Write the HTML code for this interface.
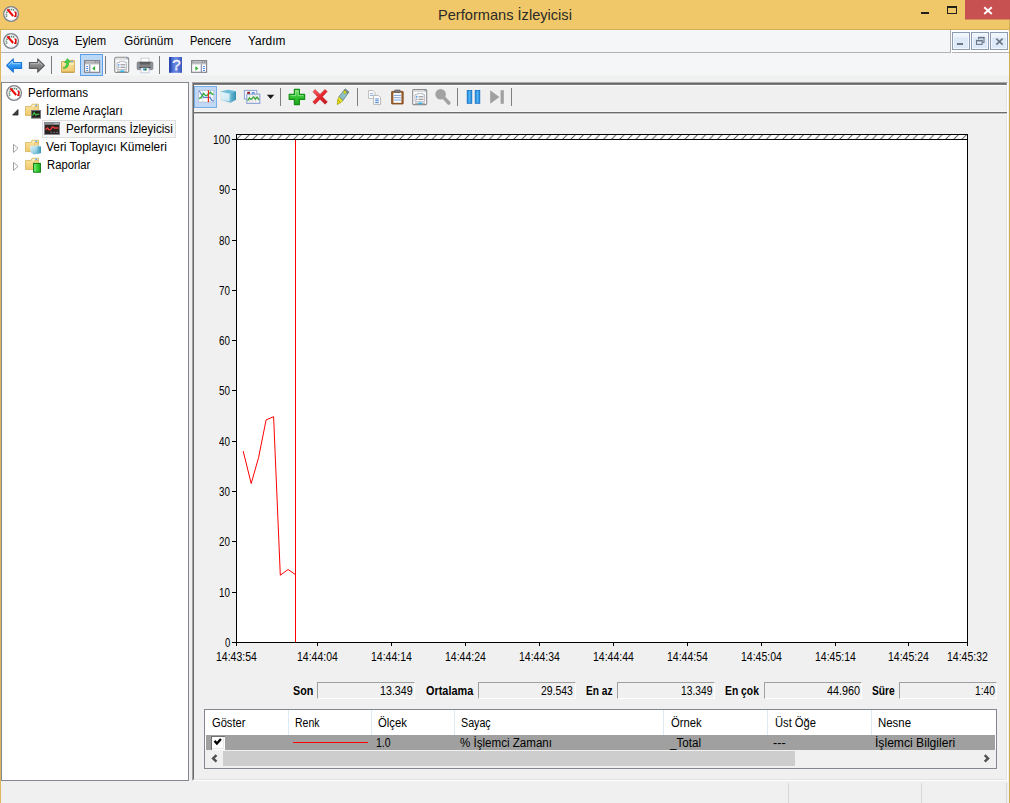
<!DOCTYPE html>
<html lang="tr"><head><meta charset="utf-8"><title>Performans İzleyicisi</title>
<style>
*{box-sizing:border-box;margin:0;padding:0}
html,body{width:1010px;height:803px;overflow:hidden;background:#f0f0f0}
body{font-family:"Liberation Sans",sans-serif;font-size:12px;color:#000;position:relative}
#root{left:0;top:0;width:1010px;height:803px;overflow:hidden}
.abs,.abs *{position:absolute}
.abs svg *{position:static}
.t{white-space:nowrap;transform-origin:0 0;line-height:14px;height:14px}
.b{display:block}
.sb{top:682px;width:98px;height:17px;border-top:1px solid #a0a0a0;border-left:1px solid #a0a0a0;border-right:1px solid #fff;border-bottom:1px solid #fff}
.cd{top:710px;width:1px;height:25px;background:#e0eaf5}
.mb{top:32px;width:18px;height:18px;border:1px solid #8c9db3;background:linear-gradient(#eef4fc 0,#eef4fc 25%,#dde9f7 30%,#dde9f7 100%);box-shadow:inset 0 0 0 1px #f4f8fd}

</style></head><body>
<div class="abs" id="root">
<!-- title bar -->
<div style="left:0;top:0;width:1010px;height:29px;background:#f0c869"></div>
<div style="left:0;top:29px;width:1010px;height:1px;background:#d3ae58"></div>
<div style="left:965px;top:0;width:45px;height:19px;background:#c75050"></div>
<div style="left:965px;top:19px;width:45px;height:1px;background:#d88a5a"></div>
<!-- menu bar -->
<div style="left:1px;top:30px;width:1008px;height:23px;background:#f5f6f7"></div>
<div style="left:1px;top:52px;width:950px;height:1px;background:#b1b2b3"></div>
<div style="left:950px;top:30px;width:1px;height:23px;background:#acadae"></div>
<div style="left:951px;top:30px;width:58px;height:23px;background:#fff"></div>
<div style="left:952px;top:52px;width:57px;height:1px;background:#b2b2b2"></div>
<!-- toolbar -->
<div style="left:1px;top:53px;width:1008px;height:23px;background:#f5f6f7"></div>
<div style="left:1px;top:75px;width:1008px;height:1px;background:#f2f3f3"></div>
<!-- tree -->
<div style="left:1px;top:82px;width:188px;height:699px;background:#fff;border:1px solid #828790"></div>
<div style="left:42px;top:120px;width:134px;height:18px;background:#f7f7f7;border:1px solid #dedede"></div>
<!-- right panel -->
<div style="left:192px;top:82px;width:816px;height:699px;border-left:1px solid #a0a0a0;border-top:1px solid #a8a8a8;border-right:1px solid #fff;border-bottom:1px solid #fff"></div>
<div style="left:193px;top:83px;width:814px;height:697px;border-left:1px solid #696969;border-top:1px solid #696969;border-right:1px solid #e3e3e3;border-bottom:1px solid #e3e3e3"></div>
<div style="left:194px;top:84px;width:813px;height:1px;background:#7c7c7c"></div>
<div style="left:194px;top:85px;width:813px;height:1px;background:#fcfcfc"></div>
<div style="left:194px;top:111px;width:813px;height:1px;background:#f5f5f5"></div>
<div style="left:194px;top:112px;width:813px;height:1px;background:#6c6c6c"></div>
<div style="left:194px;top:113px;width:813px;height:1px;background:#c0c0c0"></div>
<div style="left:194px;top:114px;width:813px;height:1px;background:#f6f6f6"></div>
<!-- chart -->
<div style="left:236px;top:134px;width:732px;height:509px;background:#fff;border:1px solid #000"></div>
<div style="left:236px;top:139px;width:732px;height:1px;background:#000"></div>
<svg class="b" style="left:232px;top:130px" width="740" height="520" viewBox="232 130 740 520">
<defs><pattern id="h" x="5.2" y="135" width="8.15" height="4" patternUnits="userSpaceOnUse"><path d="M2.5 5 L8.5 -1" stroke="#5a5a5a" stroke-width="1" fill="none"/></pattern></defs>
<rect x="237" y="135" width="730" height="4" fill="url(#h)"/>
<g stroke="#000" stroke-width="1" fill="none" shape-rendering="crispEdges">
<path d="M232 139.5h4 M232 189.5h4 M232 240.5h4 M232 290.5h4 M232 340.5h4 M232 390.5h4 M232 441.5h4 M232 491.5h4 M232 541.5h4 M232 592.5h4 M232 642.5h4"/>
<path d="M236.5 643v3 M317.5 643v3 M391.5 643v3 M465.5 643v3 M539.5 643v3 M613.5 643v3 M687.5 643v3 M761.5 643v3 M835.5 643v3 M908.5 643v3 M967.5 643v3"/>
</g>
<path d="M295.5 140V642" stroke="#ff0000" stroke-width="1" fill="none"/>
<path d="M243.2 451.1 L251.2 483.5 L258.6 457.5 L266.1 419.9 L273.6 416.7 L280.3 575.2 L288.1 569.5 L295.3 574.5" stroke="#ff0000" stroke-width="1" fill="none"/>
</svg>
<!-- stats boxes -->
<div class="sb" style="left:317px"></div><div class="sb" style="left:478px"></div><div class="sb" style="left:617px"></div><div class="sb" style="left:764px"></div><div class="sb" style="left:899px"></div>
<!-- list -->
<div style="left:204px;top:709px;width:793px;height:60px;background:#fff;border:1px solid #828790"></div>
<div class="cd" style="left:288px"></div><div class="cd" style="left:371px"></div><div class="cd" style="left:454px"></div><div class="cd" style="left:663px"></div><div class="cd" style="left:767px"></div><div class="cd" style="left:871px"></div>
<div style="left:206px;top:735px;width:789px;height:15px;background:#a0a0a0"></div>
<div style="left:211px;top:736px;width:14px;height:14px;background:#fff;border-top:1px solid #707070;border-left:1px solid #707070;box-shadow:inset -1px -1px 0 #fff,inset -2px -2px 0 #e8e8e8"></div>
<svg class="b" style="left:212px;top:736px" width="13" height="13" viewBox="0 0 13 13"><path d="M2.5 4.9 L4.9 7.5 L8.9 2.9" stroke="#000" stroke-width="2.3" fill="none"/></svg>
<div style="left:293px;top:742px;width:75px;height:1px;background:#ff0000"></div>
<!-- list scrollbar -->
<div style="left:205px;top:750px;width:791px;height:18px;background:#f0f0f0"></div>
<div style="left:223px;top:751px;width:572px;height:15px;background:#cdcdcd"></div>
<svg class="b" style="left:206px;top:750px" width="17" height="17" viewBox="0 0 17 17"><path d="M10.5 5.1 L7.1 8.4 L10.5 11.7" stroke="#505050" stroke-width="2.4" fill="none"/></svg>
<svg class="b" style="left:978px;top:750px" width="17" height="17" viewBox="0 0 17 17"><path d="M6.7 5.1 L10.1 8.4 L6.7 11.7" stroke="#505050" stroke-width="2.4" fill="none"/></svg>
<!-- status bar -->
<div style="left:788px;top:783px;width:1px;height:20px;background:#d7d7d7"></div>
<div style="left:921px;top:783px;width:1px;height:20px;background:#d7d7d7"></div>
<div style="left:1006px;top:783px;width:1px;height:20px;background:#d7d7d7"></div>
<!-- window borders -->
<div style="left:0;top:30px;width:1px;height:773px;background:#dcb75e"></div>
<div style="left:1009px;top:20px;width:1px;height:783px;background:#d4ae55"></div>
<!-- app icons -->
<svg class="b" style="left:3px;top:6px" width="16" height="16" viewBox="0 0 16 16"><use href="#perf"/></svg>
<svg class="b" style="left:3px;top:33px" width="16" height="16" viewBox="0 0 16 16"><use href="#perf"/></svg>
<svg class="b" style="left:6px;top:85px" width="16" height="16" viewBox="0 0 16 16"><use href="#perf"/></svg>
<svg class="b" style="left:0;top:0" width="0" height="0"><defs>
<g id="perf">
<circle cx="8.05" cy="8" r="7.25" fill="#fff" stroke="#80858e" stroke-width="1.5"/>
<circle cx="8.05" cy="8" r="6.1" fill="none" stroke="#eceaea" stroke-width="0.9"/>
<path d="M3.9 10.6 A4.9 4.9 0 0 1 11.7 4.9" fill="none" stroke="#4e7c64" stroke-width="1.6" stroke-dasharray="1.2 0.7"/>
<path d="M11.4 6 C12.6 6 13 6.2 12.9 7.4 L12.7 10.2 L11.2 10.2" fill="none" stroke="#d60808" stroke-width="1.6"/>
<path d="M4.4 3.4 L10.2 10" stroke="#ee0a0a" stroke-width="2.1" fill="none"/>
</g>
<linearGradient id="gb" x1="0" y1="0" x2="0" y2="1"><stop offset="0" stop-color="#7cc6ff"/><stop offset="0.5" stop-color="#2e97f2"/><stop offset="1" stop-color="#1b74d8"/></linearGradient>
<linearGradient id="gg" x1="0" y1="0" x2="0" y2="1"><stop offset="0" stop-color="#a9a9a9"/><stop offset="0.5" stop-color="#858585"/><stop offset="1" stop-color="#6a6a6a"/></linearGradient>
<linearGradient id="gf" x1="0" y1="0" x2="0" y2="1"><stop offset="0" stop-color="#fbe7a6"/><stop offset="1" stop-color="#efc869"/></linearGradient>
<linearGradient id="gh" x1="0" y1="0" x2="1" y2="0"><stop offset="0" stop-color="#2a48ae"/><stop offset="0.18" stop-color="#2a48ae"/><stop offset="0.2" stop-color="#4868d0"/><stop offset="0.55" stop-color="#6f8ae0"/><stop offset="1" stop-color="#3655c0"/></linearGradient>
<linearGradient id="gp" x1="0" y1="0" x2="0" y2="1"><stop offset="0" stop-color="#4a4a4a"/><stop offset="1" stop-color="#9a9a9a"/></linearGradient>
</defs></svg>
<!-- toolbar 1 -->
<svg class="b" style="left:6px;top:57px" width="17" height="17" viewBox="0 0 17 17"><path d="M0.7 8.5 L7.3 1.8 V5.6 H15.6 V11.4 H7.3 V15.2 Z" fill="url(#gb)" stroke="#1f78d8" stroke-width="1.1" stroke-linejoin="round"/><path d="M2.4 8.4 L6.3 4.4 V6.7 H14.5" fill="none" stroke="#b6e2ff" stroke-width="0.9" opacity="0.85"/></svg>
<svg class="b" style="left:28px;top:57px" width="17" height="17" viewBox="0 0 17 17"><path d="M16.3 8.5 L9.7 1.8 V5.6 H1.4 V11.4 H9.7 V15.2 Z" fill="url(#gg)" stroke="#5c5c5c" stroke-width="1.1" stroke-linejoin="round"/><path d="M2.5 6.7 H10.7 V4.4 L14.6 8.4" fill="none" stroke="#cfcfcf" stroke-width="0.9" opacity="0.8"/></svg>
<div style="left:51px;top:56px;width:1px;height:18px;background:#7b7b7b"></div>
<svg class="b" style="left:60px;top:57px" width="17" height="17" viewBox="0 0 17 17">
<path d="M1.5 4.6 H9.2 L9.9 3.4 H14.4 V15.3 H1.5 Z" fill="url(#gf)" stroke="#d2ae58" stroke-width="1"/>
<path d="M2 15.2H14" stroke="#b8923e" stroke-width="0.8"/>
<path d="M2.2 7H13.8" stroke="#fff4cf" stroke-width="1"/>
<path d="M11.2 4.6h1.8" stroke="#4a9af0" stroke-width="1.1"/>
<path d="M2.9 11 C5.4 10.6 6.6 8.6 6.4 5.4 L4.6 5.6 L7.4 1.6 L10.6 5 L8.6 5.2 C9 9.6 6.2 12.2 2.9 11Z" fill="#46d246" stroke="#2aa62a" stroke-width="0.6"/>
</svg>
<div style="left:80px;top:54px;width:23px;height:22px;background:#bcd8f7;border:1px solid #5a9de8"></div>
<svg class="b" style="left:83px;top:57px" width="18" height="17" viewBox="0 0 18 17">
<rect x="1.6" y="3.6" width="15" height="11.7" fill="#fff" stroke="#7e7e88" stroke-width="1.1"/>
<rect x="2.1" y="4.1" width="14" height="3.2" fill="#92929a"/>
<path d="M2.8 4.9h9M13 4.9h0.9M14.9 4.9h0.9M2.2 6.9h13.8" stroke="#f4f4f6" stroke-width="0.7"/>
<path d="M6.8 7.4v7.6" stroke="#66708c" stroke-width="0.9"/>
<path d="M3.2 9.6h2M3.2 11.5h2M3.2 13.5h2" stroke="#2f74de" stroke-width="0.9"/>
<path d="M12.1 9 L9.1 11.4 L12.1 13.8Z" fill="#35b035"/>
</svg>
<div style="left:105px;top:56px;width:1px;height:18px;background:#7b7b7b"></div>
<svg class="b" style="left:113px;top:56px" width="18" height="18" viewBox="0 0 18 18">
<rect x="1.7" y="1.3" width="14" height="15.2" rx="1.6" fill="#fcfcfc" stroke="#8b8b8b" stroke-width="1.1"/>
<path d="M2.5 3h12.5" stroke="#d8d8d8" stroke-width="1.4"/>
<path d="M13.5 2.6h1" stroke="#4a7fd0" stroke-width="1"/>
<path d="M4 13.5V6.5H6.5V5.3H12V6.5H13.6V13.5Z" fill="#f4f6fa" stroke="#b4b8c2" stroke-width="0.9"/>
<rect x="5" y="8.2" width="1.3" height="1.3" fill="#2a90f0"/><rect x="5" y="10.7" width="1.3" height="1.3" fill="#9a9a9a"/>
<path d="M7.5 8.8h5M7.5 11.3h5" stroke="#8e8e8e" stroke-width="1"/>
<path d="M4 15.3h10" stroke="#b0b0b0" stroke-width="1.4"/>
<path d="M7.5 15.3h3.4" stroke="#22b8f0" stroke-width="1.6"/>
</svg>
<svg class="b" style="left:136px;top:57px" width="18" height="17" viewBox="0 0 18 17">
<rect x="5" y="1.2" width="8" height="5" fill="#fff" stroke="#c4c4c4" stroke-width="0.8"/>
<rect x="1.2" y="5" width="15.6" height="7.6" rx="1" fill="#8e9298" stroke="#74787e" stroke-width="0.8"/>
<rect x="3.6" y="5.2" width="10.8" height="4.6" fill="url(#gp)"/>
<rect x="3.6" y="9.8" width="10.8" height="1.2" fill="#2c2c2c"/>
<rect x="5" y="11" width="8" height="4.8" fill="#fff" stroke="#b8c4d8" stroke-width="0.8"/>
<rect x="7.2" y="11.4" width="1.6" height="2.2" fill="#2a86e0"/><rect x="8.8" y="11.4" width="1.8" height="2.2" fill="#1e7a3a"/>
</svg>
<div style="left:159px;top:56px;width:1px;height:18px;background:#7b7b7b"></div>
<svg class="b" style="left:168px;top:56px" width="15" height="18" viewBox="0 0 15 18">
<rect x="1" y="1" width="13" height="15.8" fill="url(#gh)"/>
<text x="8.3" y="14.2" font-family="Liberation Sans, sans-serif" font-size="15" fill="#f4f6ff" text-anchor="middle" stroke="#f4f6ff" stroke-width="0.4">?</text>
</svg>
<svg class="b" style="left:190px;top:57px" width="18" height="17" viewBox="0 0 18 17">
<rect x="1.6" y="3.6" width="15" height="11.7" fill="#fff" stroke="#7e7e88" stroke-width="1.1"/>
<rect x="2.1" y="4.1" width="14" height="3.2" fill="#92929a"/>
<path d="M2.8 4.9h9M13 4.9h0.9M14.9 4.9h0.9M2.2 6.9h13.8" stroke="#f4f4f6" stroke-width="0.7"/>
<path d="M11.3 7.4v7.6" stroke="#66708c" stroke-width="0.9"/>
<path d="M12.9 9.6h2M12.9 11.5h2M12.9 13.5h2" stroke="#2f74de" stroke-width="0.9"/>
<path d="M5.4 9 L8.4 11.4 L5.4 13.8Z" fill="#35b035"/>
</svg>
<!-- tree icons -->
<svg class="b" style="left:0;top:0" width="0" height="0"><defs>
<g id="fold">
<path d="M0.5 3.5 H6 L7.2 1.2 H13.5 V3.5 H9.8 V12.5 H0.5 Z" fill="url(#gf)" stroke="#d9bb68" stroke-width="0.9"/>
<path d="M7.5 2.2 H13 V3.4 H7.5Z" fill="#fdf6dc"/>
<path d="M10.4 2.3h1.8" stroke="#3a8fe8" stroke-width="1"/>
<path d="M9.8 3.5 H13.5 V12.5 H9.8" fill="#f3d78a" stroke="#d9bb68" stroke-width="0.9"/>
</g>
<linearGradient id="gc" x1="0" y1="0" x2="1" y2="1"><stop offset="0" stop-color="#e8f6fb"/><stop offset="0.5" stop-color="#9fd3e6"/><stop offset="1" stop-color="#3f9fc0"/></linearGradient>
<linearGradient id="gc2" x1="0" y1="0" x2="1" y2="0"><stop offset="0" stop-color="#6fbcd6"/><stop offset="1" stop-color="#2f8fb0"/></linearGradient>
<linearGradient id="gn" x1="0" y1="0" x2="1" y2="0"><stop offset="0" stop-color="#8af08a"/><stop offset="0.5" stop-color="#3ad43a"/><stop offset="1" stop-color="#1fb01f"/></linearGradient>
<linearGradient id="gpl" x1="0" y1="0" x2="0" y2="1"><stop offset="0" stop-color="#7ae27a"/><stop offset="0.5" stop-color="#35c435"/><stop offset="1" stop-color="#1ea51e"/></linearGradient>
<linearGradient id="gx" x1="0" y1="0" x2="1" y2="1"><stop offset="0" stop-color="#f4686c"/><stop offset="0.5" stop-color="#e4282e"/><stop offset="1" stop-color="#b81a1e"/></linearGradient>
<linearGradient id="gpa" x1="0" y1="0" x2="1" y2="0"><stop offset="0" stop-color="#1a7fd6"/><stop offset="0.5" stop-color="#4fb6f6"/><stop offset="1" stop-color="#1a7fd6"/></linearGradient>
</defs></svg>
<svg class="b" style="left:12px;top:109px" width="7" height="7" viewBox="0 0 7 7"><path d="M6 0.6 V6 H0.6 Z" fill="#404040" stroke="#202020" stroke-width="0.8"/></svg>
<svg class="b" style="left:12px;top:143px" width="8" height="11" viewBox="0 0 8 11"><path d="M1.5 1.3 V9.5 L6 5.4 Z" fill="#fff" stroke="#a2a2a2" stroke-width="1"/></svg>
<svg class="b" style="left:12px;top:161px" width="8" height="11" viewBox="0 0 8 11"><path d="M1.5 1.3 V9.5 L6 5.4 Z" fill="#fff" stroke="#a2a2a2" stroke-width="1"/></svg>
<svg class="b" style="left:25px;top:102px" width="17" height="17" viewBox="0 0 17 17"><use href="#fold" x="0" y="1"/>
<rect x="6.5" y="8.5" width="9" height="7.6" fill="#26221f" stroke="#707478" stroke-width="1"/>
<path d="M7.6 13.4 L9.2 10.6 L10.8 13.2 L12.2 12 L14.4 12.2" fill="none" stroke="#3fd04a" stroke-width="1.1"/>
</svg>
<svg class="b" style="left:25px;top:138px" width="17" height="17" viewBox="0 0 17 17"><use href="#fold" x="0" y="1"/>
<path d="M5 8 L13 7.4 L16 8.6 V15 L9 16.6 L5.6 14.6 Z" fill="url(#gc)"/>
<path d="M12.4 8.4 L16 8.6 V15 L12 16 Z" fill="url(#gc2)" opacity="0.85"/>
</svg>
<svg class="b" style="left:25px;top:156px" width="17" height="17" viewBox="0 0 17 17"><use href="#fold" x="0" y="1"/>
<rect x="8.6" y="7.4" width="6.8" height="8.8" fill="url(#gn)" stroke="#0f7a0f" stroke-width="1"/>
</svg>
<svg class="b" style="left:44px;top:122px" width="16" height="13" viewBox="0 0 16 13">
<rect x="0.5" y="0.5" width="15" height="12" fill="#2a2320" stroke="#84888c" stroke-width="1"/>
<rect x="1" y="1" width="14" height="1.8" fill="#8c9094"/>
<path d="M10.5 1.7h1M12.2 1.7h1M13.8 1.7h0.8" stroke="#e8e8e8" stroke-width="0.8"/>
<path d="M1.5 7.6 L3.6 6 L5 7.8 L6.6 7.6 L8.6 4.6 L10.4 6 L14.5 6" fill="none" stroke="#f03a3a" stroke-width="1.3"/>
<path d="M6.5 10.3h1.6M9.5 10.3h1.6M12.3 10.3h1.6" stroke="#8a8a8a" stroke-width="0.9"/>
</svg>
<!-- toolbar 2 -->
<div style="left:194px;top:86px;width:23px;height:22px;background:#c0d8f3;border:1px solid #76aeea"></div>
<svg class="b" style="left:198px;top:89px" width="17" height="15" viewBox="0 0 17 15">
<rect x="0.6" y="1.4" width="15.2" height="11.6" fill="#fff" stroke="#aebcd6" stroke-width="0.8"/>
<path d="M1 5.2h14.5M1 9h14.5M4.6 1.6v11M12.4 1.6v11" stroke="#c9d4e8" stroke-width="0.7"/>
<path d="M1.2 2 L5.6 8.4 L12 8.4 L14 11.6 L15.6 11.6" fill="none" stroke="#5b7fd0" stroke-width="1.1"/>
<path d="M1 9.6 L3 8.6 L5.6 4.4 L7.4 6.6 L9 6.4 L12.4 3.2 L14 5 L15.6 5.6" fill="none" stroke="#2fae3a" stroke-width="1.4"/>
<path d="M10.4 1.2V13.2" stroke="#ee2a12" stroke-width="1.2"/>
</svg>
<svg class="b" style="left:219px;top:89px" width="18" height="15" viewBox="0 0 18 15">
<path d="M1 2.4 L9 0.8 L17 2.2 V10.6 L11.4 13.8 L2.2 11 Z" fill="url(#gc)"/>
<path d="M11.2 4.4 L17 2.2 V10.6 L11.4 13.8 Z" fill="url(#gc2)"/>
<path d="M1 2.4 L9 0.8 L17 2.2 L11.2 4.4 Z" fill="#58b4d2" opacity="0.8"/>
<path d="M2 3.4 L10.4 5 L10.6 12.6 L2.6 10.4Z" fill="#f2fafd" opacity="0.65"/>
</svg>
<svg class="b" style="left:243px;top:89px" width="18" height="16" viewBox="0 0 18 16">
<rect x="1.4" y="1.4" width="12.4" height="8.6" fill="#f4f6fb" stroke="#8ca2d4" stroke-width="1"/>
<rect x="4.2" y="2.8" width="2.8" height="2.2" fill="#a0121e"/><rect x="8.8" y="3.2" width="2.8" height="1.4" fill="#3a6ee0"/>
<rect x="3.8" y="5.2" width="13" height="9.2" fill="#f4f4f4" stroke="#8ca2d4" stroke-width="1.1"/>
<path d="M6.6 6v7.6M9.6 6v7.6M12.6 6v7.6" stroke="#d0d0d0" stroke-width="0.7"/>
<path d="M4.6 11.6 L6.4 9 L8 10.4 L10.6 8 L12.4 10.2 L14 8.2 L16 11" fill="none" stroke="#3aa83a" stroke-width="1.3"/>
</svg>
<svg class="b" style="left:266px;top:94px" width="9" height="6" viewBox="0 0 9 6"><path d="M0.9 0.7 H8.3 L4.6 5 Z" fill="#1a1a1a"/></svg>
<div style="left:280px;top:88px;width:1px;height:18px;background:#7e7e7e"></div>
<svg class="b" style="left:288px;top:88px" width="18" height="18" viewBox="0 0 18 18"><path d="M6.4 1.4 H11.4 V6.4 H16.6 V11.4 H11.4 V16.6 H6.4 V11.4 H1.2 V6.4 H6.4 Z" fill="url(#gpl)" stroke="#159015" stroke-width="1.2" stroke-linejoin="round"/><path d="M7.6 2.8 H10.2 V7.6 H15.2 M7.6 2.8 V7.6 H2.6" fill="none" stroke="#a8f0a0" stroke-width="0.8" opacity="0.8"/></svg>
<svg class="b" style="left:311px;top:88px" width="18" height="18" viewBox="0 0 18 18"><path d="M2 3.8 L4 1.6 L9 6.4 L14 1.4 L16.2 3.6 L11.4 8.8 L16.4 14 L14 16.2 L9 11.2 L4 16.2 L1.8 14 L6.6 8.8 Z" fill="url(#gx)" stroke="#c8282c" stroke-width="0.6" stroke-linejoin="round"/></svg>
<svg class="b" style="left:335px;top:88px" width="16" height="18" viewBox="0 0 16 18">
<path d="M2.2 16.6 L2.8 11.6 L5.6 14.6 Z" fill="#e6e000" stroke="#a09a10" stroke-width="0.7"/>
<path d="M2.8 11.6 L4.2 8.4 L8 12.4 L5.6 14.6Z" fill="#ece620" stroke="#a09a10" stroke-width="0.7"/>
<path d="M4.2 8.4 L9 2.2 L12.8 5.6 L8 12.4 Z" fill="#8fc0c6" stroke="#5d8088" stroke-width="0.8"/>
<path d="M9 2.2 L10.4 0.9 L14 4 L12.8 5.6Z" fill="#6e8e98" stroke="#50686e" stroke-width="0.6"/>
<path d="M8.2 4.4 L9.8 2.4 L11.6 4 L10 6Z" fill="#e6e010" stroke="#9a9410" stroke-width="0.5"/>
</svg>
<div style="left:357px;top:88px;width:1px;height:18px;background:#7e7e7e"></div>
<svg class="b" style="left:367px;top:89px" width="16" height="17" viewBox="0 0 16 17">
<path d="M1.5 1.5 H6 L8 3.5 V9.5 H1.5Z" fill="#fdfdfd" stroke="#b8b8b8" stroke-width="0.9"/>
<path d="M3 4.6h3M3 6.4h3.6" stroke="#7aa0d6" stroke-width="0.8"/>
<path d="M6.6 6.4 H11.4 L13.6 8.6 V15.4 H6.6Z" fill="#fdfdfd" stroke="#b0b0b0" stroke-width="0.9"/>
<path d="M8.2 10h3.6M8.2 11.8h3.6M8.2 13.6h3.6" stroke="#3a78d0" stroke-width="0.9"/>
</svg>
<svg class="b" style="left:390px;top:89px" width="15" height="17" viewBox="0 0 15 17">
<rect x="1.6" y="2.4" width="11.6" height="12.6" rx="0.4" fill="#9c5e2c" stroke="#7a481e" stroke-width="0.8"/>
<rect x="3.4" y="3.8" width="8" height="10" fill="#fff"/>
<path d="M3.8 6.4h7.2M3.8 8.7h7.2M3.8 11h7.2" stroke="#7aa6e0" stroke-width="1"/>
<rect x="4.6" y="1" width="5.6" height="2.6" rx="0.6" fill="#808080" stroke="#505050" stroke-width="0.6"/>
</svg>
<svg class="b" style="left:411px;top:88px" width="18" height="18" viewBox="0 0 18 18">
<rect x="1.7" y="1.6" width="14" height="15" rx="1" fill="#fcfcfc" stroke="#8b8b8b" stroke-width="1.1"/>
<path d="M2.5 3.2h12.5" stroke="#d8d8d8" stroke-width="1.4"/>
<path d="M13.5 2.8h1" stroke="#4a7fd0" stroke-width="1"/>
<path d="M4 13.6V6.6H6.5V5.4H12V6.6H13.6V13.6Z" fill="#f4f6fa" stroke="#b4b8c2" stroke-width="0.9"/>
<rect x="5" y="8.2" width="1.3" height="1.3" fill="#2a90f0"/><rect x="5" y="10.7" width="1.3" height="1.3" fill="#9a9a9a"/>
<path d="M7.5 8.8h5M7.5 11.3h5" stroke="#8e8e8e" stroke-width="1"/>
<path d="M4 15.4h10" stroke="#b0b0b0" stroke-width="1.4"/>
<path d="M7.5 15.4h3.4" stroke="#22b8f0" stroke-width="1.6"/>
</svg>
<svg class="b" style="left:434px;top:88px" width="18" height="18" viewBox="0 0 18 18">
<circle cx="6.6" cy="6.2" r="5.3" fill="#a2a2a2"/>
<path d="M9.8 9.6 L14.8 15" stroke="#a2a2a2" stroke-width="3.6" stroke-linecap="round"/>
</svg>
<div style="left:457px;top:88px;width:1px;height:18px;background:#7e7e7e"></div>
<svg class="b" style="left:466px;top:89px" width="16" height="16" viewBox="0 0 16 16">
<rect x="1.2" y="1.5" width="4.6" height="12.8" fill="url(#gpa)" stroke="#1670c4" stroke-width="0.8"/>
<rect x="9.2" y="1.5" width="4.6" height="12.8" fill="url(#gpa)" stroke="#1670c4" stroke-width="0.8"/>
</svg>
<svg class="b" style="left:489px;top:89px" width="17" height="16" viewBox="0 0 17 16">
<path d="M1.2 1.2 L10.4 8 L1.2 14.8Z" fill="#a0a0a0"/><rect x="11.6" y="1.2" width="3.2" height="13.6" fill="#a0a0a0"/>
</svg>
<div style="left:511px;top:88px;width:1px;height:18px;background:#7e7e7e"></div>
<!-- window controls -->
<div style="left:921px;top:12px;width:8px;height:2px;background:#22201a"></div>
<div style="left:947px;top:6px;width:10px;height:8px;border:1px solid #22201a;border-top-width:2px"></div>
<svg class="b" style="left:982px;top:5px" width="12" height="11" viewBox="0 0 12 11"><path d="M2.2 2.2 L9.8 9 M9.8 2.2 L2.2 9" stroke="#fff" stroke-width="1.9" fill="none"/></svg>
<!-- MDI buttons -->
<div class="mb" style="left:952px"></div><div class="mb" style="left:971px"></div><div class="mb" style="left:990px"></div>
<div style="left:957px;top:43px;width:6px;height:2px;background:#6c7888"></div>
<svg class="b" style="left:975px;top:36px" width="11" height="10" viewBox="0 0 11 10"><path d="M3.5 3.2 V1.6 H9 V6.4 H7.6" fill="none" stroke="#6c7888" stroke-width="1.1"/><path d="M3 1.5h6.5" stroke="#6c7888" stroke-width="1.4"/><rect x="1.5" y="4.6" width="5.6" height="3.8" fill="none" stroke="#6c7888" stroke-width="1.1"/><path d="M1 4.6h6.6" stroke="#6c7888" stroke-width="1.5"/></svg>
<svg class="b" style="left:995px;top:37px" width="9" height="9" viewBox="0 0 9 9"><path d="M1.3 1.6 L7.6 7.6 M7.6 1.6 L1.3 7.6" stroke="#6c7888" stroke-width="1.7" fill="none"/></svg>

<!-- text -->
<span class="t" style="left:437.93px;top:6.20px;transform:scaleX(0.9736);font-size:15px;line-height:17px;height:17px;color:#2b2a26;">Performans İzleyicisi</span>
<span class="t" style="left:27.60px;top:34.00px;transform:scaleX(0.8998);">Dosya</span>
<span class="t" style="left:75.10px;top:34.00px;transform:scaleX(0.9357);">Eylem</span>
<span class="t" style="left:123.90px;top:34.00px;transform:scaleX(0.9855);">Görünüm</span>
<span class="t" style="left:190.40px;top:34.00px;transform:scaleX(0.9173);">Pencere</span>
<span class="t" style="left:248.30px;top:34.00px;transform:scaleX(0.9897);">Yardım</span>
<span class="t" style="left:27.80px;top:86.00px;transform:scaleX(0.9674);">Performans</span>
<span class="t" style="left:45.63px;top:104.00px;transform:scaleX(0.9658);">İzleme Araçları</span>
<span class="t" style="left:65.50px;top:122.00px;transform:scaleX(0.9702);">Performans İzleyicisi</span>
<span class="t" style="left:46.30px;top:140.00px;transform:scaleX(0.9919);">Veri Toplayıcı Kümeleri</span>
<span class="t" style="left:46.60px;top:158.00px;transform:scaleX(0.9408);">Raporlar</span>
<span class="t" style="left:212.80px;top:132.90px;transform:scaleX(0.8551);">100</span>
<span class="t" style="left:219.00px;top:183.20px;transform:scaleX(0.8191);">90</span>
<span class="t" style="left:219.00px;top:233.50px;transform:scaleX(0.8191);">80</span>
<span class="t" style="left:219.00px;top:283.80px;transform:scaleX(0.8191);">70</span>
<span class="t" style="left:219.00px;top:334.10px;transform:scaleX(0.8191);">60</span>
<span class="t" style="left:219.00px;top:384.40px;transform:scaleX(0.8191);">50</span>
<span class="t" style="left:219.00px;top:434.70px;transform:scaleX(0.8191);">40</span>
<span class="t" style="left:219.00px;top:485.00px;transform:scaleX(0.8191);">30</span>
<span class="t" style="left:219.00px;top:535.30px;transform:scaleX(0.8191);">20</span>
<span class="t" style="left:219.00px;top:585.60px;transform:scaleX(0.8191);">10</span>
<span class="t" style="left:224.60px;top:635.90px;transform:scaleX(0.8000);">0</span>
<span class="t" style="left:216.00px;top:650.00px;transform:scaleX(0.8738);">14:43:54</span>
<span class="t" style="left:297.10px;top:650.00px;transform:scaleX(0.8738);">14:44:04</span>
<span class="t" style="left:371.10px;top:650.00px;transform:scaleX(0.8738);">14:44:14</span>
<span class="t" style="left:445.00px;top:650.00px;transform:scaleX(0.8738);">14:44:24</span>
<span class="t" style="left:519.00px;top:650.00px;transform:scaleX(0.8738);">14:44:34</span>
<span class="t" style="left:592.90px;top:650.00px;transform:scaleX(0.8738);">14:44:44</span>
<span class="t" style="left:666.90px;top:650.00px;transform:scaleX(0.8738);">14:44:54</span>
<span class="t" style="left:740.80px;top:650.00px;transform:scaleX(0.8738);">14:45:04</span>
<span class="t" style="left:814.50px;top:650.00px;transform:scaleX(0.8738);">14:45:14</span>
<span class="t" style="left:888.30px;top:650.00px;transform:scaleX(0.8738);">14:45:24</span>
<span class="t" style="left:946.70px;top:650.00px;transform:scaleX(0.8738);">14:45:32</span>
<span class="t" style="left:293.00px;top:684.00px;transform:scaleX(0.8955);font-weight:bold;">Son</span>
<span class="t" style="left:425.50px;top:684.00px;transform:scaleX(0.9073);font-weight:bold;">Ortalama</span>
<span class="t" style="left:586.30px;top:684.00px;transform:scaleX(0.8455);font-weight:bold;">En az</span>
<span class="t" style="left:725.40px;top:684.00px;transform:scaleX(0.8621);font-weight:bold;">En çok</span>
<span class="t" style="left:872.00px;top:684.00px;transform:scaleX(0.8517);font-weight:bold;">Süre</span>
<span class="t" style="left:380.20px;top:684.00px;transform:scaleX(0.8912);">13.349</span>
<span class="t" style="left:541.00px;top:684.00px;transform:scaleX(0.8696);">29.543</span>
<span class="t" style="left:680.90px;top:684.00px;transform:scaleX(0.8561);">13.349</span>
<span class="t" style="left:826.80px;top:684.00px;transform:scaleX(0.9020);">44.960</span>
<span class="t" style="left:974.70px;top:684.00px;transform:scaleX(0.8572);">1:40</span>
<span class="t" style="left:212.40px;top:716.30px;transform:scaleX(0.9274);">Göster</span>
<span class="t" style="left:295.40px;top:716.30px;transform:scaleX(0.8754);">Renk</span>
<span class="t" style="left:378.20px;top:716.30px;transform:scaleX(0.9408);">Ölçek</span>
<span class="t" style="left:461.00px;top:716.30px;transform:scaleX(0.8905);">Sayaç</span>
<span class="t" style="left:670.50px;top:716.30px;transform:scaleX(0.9353);">Örnek</span>
<span class="t" style="left:774.50px;top:716.30px;transform:scaleX(0.9314);">Üst Öğe</span>
<span class="t" style="left:878.00px;top:716.30px;transform:scaleX(0.9511);">Nesne</span>
<span class="t" style="left:376.20px;top:736.00px;transform:scaleX(0.8702);">1.0</span>
<span class="t" style="left:460.30px;top:736.00px;transform:scaleX(0.9650);">% İşlemci Zamanı</span>
<span class="t" style="left:669.57px;top:736.00px;transform:scaleX(0.9705);">_Total</span>
<span class="t" style="left:773.00px;top:736.00px;transform:scaleX(1.0507);">---</span>
<span class="t" style="left:875.29px;top:736.00px;transform:scaleX(1.0105);">İşlemci Bilgileri</span>
</div>
</body></html>
